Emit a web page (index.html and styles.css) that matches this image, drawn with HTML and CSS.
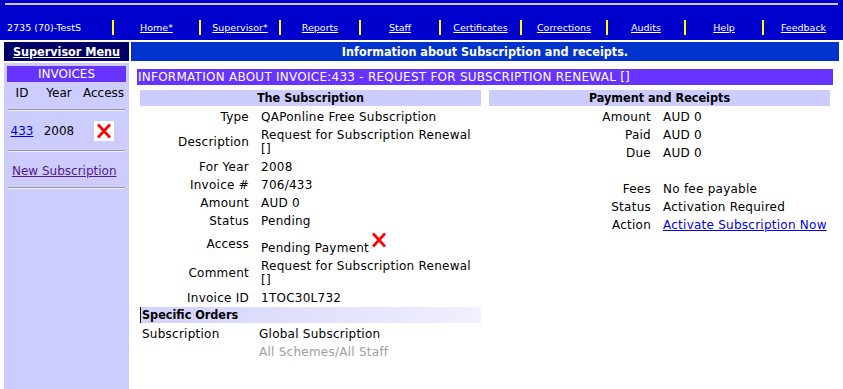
FILE: index.html
```html
<!DOCTYPE html>
<html>
<head>
<meta charset="utf-8">
<title>Subscription</title>
<link rel="stylesheet" href="styles.css">
</head>
<body>
<div class="topbar">
  <div class="topline"></div>
  <nav class="nav">
    <span class="user">2735 (70)-TestS</span>
    <span class="navcell"><a href="#">Home*</a></span>
    <span class="navcell"><a href="#">Supervisor*</a></span>
    <span class="navcell"><a href="#">Reports</a></span>
    <span class="navcell"><a href="#">Staff</a></span>
    <span class="navcell"><a href="#">Certificates</a></span>
    <span class="navcell"><a href="#">Corrections</a></span>
    <span class="navcell"><a href="#">Audits</a></span>
    <span class="navcell"><a href="#">Help</a></span>
    <span class="navcell"><a href="#">Feedback</a></span>
  </nav>
</div>
<div class="layout">
  <aside class="side">
    <div class="menu-title"><a href="#">Supervisor Menu</a></div>
    <div class="sidebar">
      <div class="inv-head">INVOICES</div>
      <div class="inv-grid inv-cols"><span>ID</span><span>Year</span><span>Access</span></div>
      <div class="rule rule1"></div>
      <div class="inv-grid inv-row">
        <a href="#" class="inv-id">433</a>
        <span>2008</span>
        <span class="xbox"><svg class="xicon" width="16" height="16" viewBox="0 0 16 16"><path d="M2 1.5 L14 14.5 M14 1.5 L2 14.5" stroke="#ff0000" stroke-width="2.6" fill="none"/></svg></span>
      </div>
      <div class="rule rule2"></div>
      <a href="#" class="new-sub">New Subscription</a>
      <div class="rule rule3"></div>
    </div>
  </aside>
  <main class="content">
    <div class="page-title">Information about Subscription and receipts.</div>
    <div class="panel">
      <div class="invoice-bar">INFORMATION ABOUT INVOICE:433 - REQUEST FOR SUBSCRIPTION RENEWAL []</div>
      <div class="cols">
        <section class="info">
          <div class="sec-head">The Subscription</div>
          <dl class="rows">
            <dt>Type</dt><dd>QAPonline Free Subscription</dd>
            <dt>Description</dt><dd>Request for Subscription Renewal<br>[]</dd>
            <dt>For Year</dt><dd>2008</dd>
            <dt>Invoice #</dt><dd>706/433</dd>
            <dt>Amount</dt><dd>AUD 0</dd>
            <dt>Status</dt><dd>Pending</dd>
            <dt>Access</dt><dd>Pending Payment<svg class="xicon inline-x" width="16" height="16" viewBox="0 0 16 16"><path d="M2 1.5 L14 14.5 M14 1.5 L2 14.5" stroke="#ff0000" stroke-width="2.6" fill="none"/></svg></dd>
            <dt>Comment</dt><dd>Request for Subscription Renewal<br>[]</dd>
            <dt>Invoice ID</dt><dd>1TOC30L732</dd>
          </dl>
          <div class="orders-head">Specific Orders</div>
          <div class="orders">
            <span class="o-label">Subscription</span><span>Global Subscription</span>
            <span class="o-label"></span><span class="muted">All Schemes/All Staff</span>
          </div>
        </section>
        <section class="info right">
          <div class="sec-head">Payment and Receipts</div>
          <dl class="rows">
            <dt>Amount</dt><dd>AUD 0</dd>
            <dt>Paid</dt><dd>AUD 0</dd>
            <dt>Due</dt><dd>AUD 0</dd>
            <dt>&nbsp;</dt><dd>&nbsp;</dd>
            <dt>Fees</dt><dd>No fee payable</dd>
            <dt>Status</dt><dd>Activation Required</dd>
            <dt>Action</dt><dd><a href="#" class="link">Activate Subscription Now</a></dd>
          </dl>
        </section>
      </div>
    </div>
  </main>
</div>
</body>
</html>
```
FILE: styles.css
```css
body {
  margin: 0;
  font-family: "DejaVu Sans", Verdana, sans-serif;
  font-size: 12px;
  color: #000;
  background: #fff;
}

.topbar {
  background: #0000cc;
  height: 40px;
  padding-top: 3px;
  box-sizing: border-box;
}
.topline {
  height: 2px;
  margin: 0 5px;
  background: #c8c8e8;
}
.nav {
  display: grid;
  grid-template-columns: 112px 87px 80px 80px 80px 81px 86px 78px 78px 1fr;
  margin-top: 15px;
  height: 15px;
  font-size: 9.5px;
  line-height: 15px;
  color: #fff;
}
.user {
  padding-left: 7px;
  white-space: nowrap;
}
.navcell {
  border-left: 2px solid #ffff00;
  text-align: center;
  white-space: nowrap;
}
.navcell a {
  color: #fff;
  text-decoration: underline;
}

.layout {
  display: grid;
  grid-template-columns: 125px 1fr;
  column-gap: 2px;
  padding: 2px 4px 0 4px;
  min-height: calc(100vh - 40px);
  box-sizing: border-box;
}
.side {
  display: flex;
  flex-direction: column;
}
.menu-title {
  height: 19px;
  background: #000066;
  text-align: center;
  font-family: "DejaVu Sans Condensed", "Liberation Sans", sans-serif;
  font-weight: bold;
  font-size: 12.5px;
  line-height: 19px;
}
.menu-title a {
  color: #fff;
  text-decoration: underline;
}
.sidebar {
  flex: 1;
  margin-top: 2px;
  background: #ccccff;
  padding: 3px 3px 0;
}
.inv-head {
  background: #6633ff;
  color: #fff;
  text-align: center;
  line-height: 16px;
}
.inv-grid {
  display: grid;
  grid-template-columns: 30px 44px 45px;
  text-align: center;
  align-items: center;
}
.inv-cols {
  margin-top: 2px;
  line-height: 18px;
}
.rule {
  margin: 0 1px;
  border-top: 1px solid #999;
  border-bottom: 1px solid #eeeeee;
}
.rule1 { margin-top: 7px; }
.rule2 { margin-top: 9px; }
.rule3 { margin-top: 8px; }
.inv-row {
  margin-top: 10px;
  height: 20px;
}
.inv-id {
  color: #0000ee;
}
.xbox {
  justify-self: center;
  display: flex;
  align-items: center;
  justify-content: center;
  width: 20px;
  height: 20px;
  background: #fff;
}
.xicon {
  display: block;
}
.new-sub {
  display: block;
  margin-top: 11px;
  padding-left: 5px;
  line-height: 16px;
  color: #551a8b;
}

.page-title {
  height: 19px;
  background: #0033cc;
  color: #fff;
  text-align: center;
  font-family: "DejaVu Sans Condensed", "Liberation Sans", sans-serif;
  font-weight: bold;
  font-size: 12.5px;
  line-height: 19px;
}
.panel {
  padding: 8px 6px 0;
}
.invoice-bar {
  background: #6633ff;
  color: #fff;
  line-height: 16px;
  padding-left: 1px;
  letter-spacing: 0.25px;
  white-space: nowrap;
}
.cols {
  display: grid;
  grid-template-columns: 1fr 1fr;
  column-gap: 8px;
  padding: 5px 3px 0;
  letter-spacing: 0.25px;
}
.sec-head {
  background: #ccccff;
  text-align: center;
  font-family: "DejaVu Sans Condensed", "Liberation Sans", sans-serif;
  font-weight: bold;
  font-size: 12.5px;
  letter-spacing: 0;
  line-height: 16px;
  margin-bottom: 2px;
}
.rows {
  display: grid;
  grid-template-columns: 109px 1fr;
  column-gap: 12px;
  margin: 0;
}
.right .rows {
  grid-template-columns: 162px 1fr;
}
.rows dt,
.rows dd {
  margin: 0;
  padding: 2px 0;
  line-height: 14px;
}
.rows dt {
  text-align: right;
  align-self: center;
}
.inline-x {
  display: inline-block;
  vertical-align: 4px;
  margin-left: 2px;
}
.orders-head {
  background: linear-gradient(to right, #d2d2fb, #f0f0fe);
  font-family: "DejaVu Sans Condensed", "Liberation Sans", sans-serif;
  font-weight: bold;
  font-size: 12.5px;
  letter-spacing: 0;
  line-height: 16px;
  border-left: 1px solid #000;
  padding-left: 1px;
  margin-bottom: 2px;
}
.orders {
  display: grid;
  grid-template-columns: 119px 1fr;
}
.orders span {
  padding: 2px 0;
  line-height: 14px;
}
.o-label {
  padding-left: 2px !important;
}
.muted {
  color: #a0a0a0;
}
.link {
  color: #0000ee;
}
```
